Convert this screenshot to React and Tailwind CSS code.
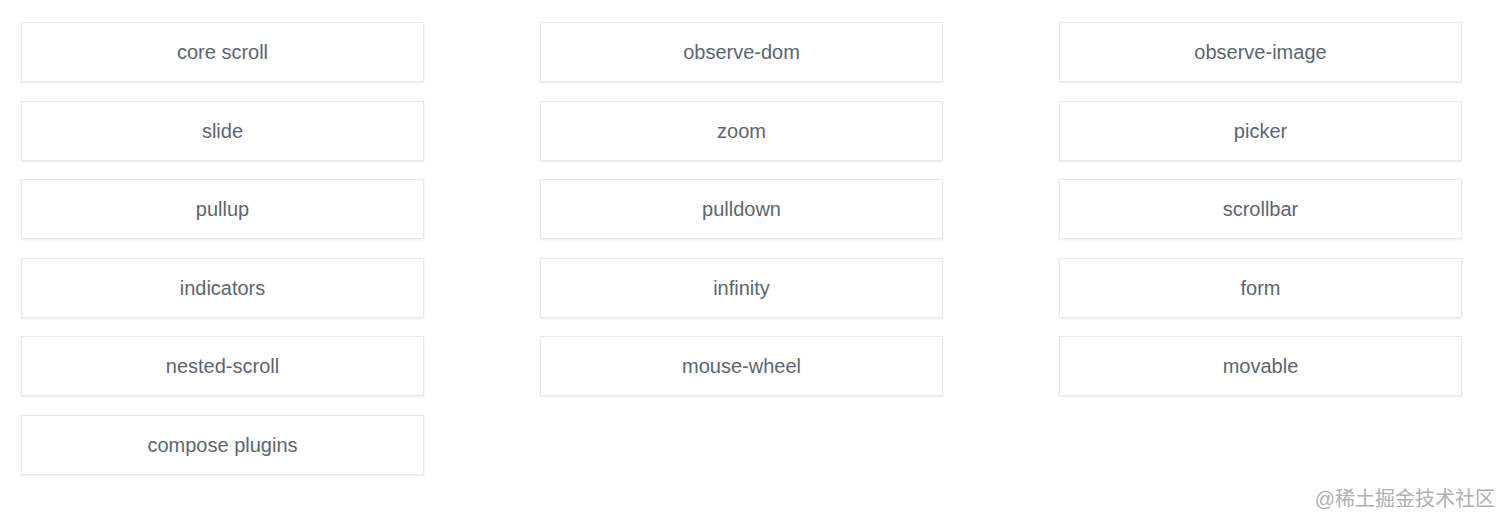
import React from 'react';

const items = [
  'core scroll', 'observe-dom', 'observe-image',
  'slide', 'zoom', 'picker',
  'pullup', 'pulldown', 'scrollbar',
  'indicators', 'infinity', 'form',
  'nested-scroll', 'mouse-wheel', 'movable',
  'compose plugins',
];

const App = () => (
  <div className="relative h-[526px] w-[1512px] bg-white font-['Liberation_Sans',Arial,sans-serif] overflow-hidden">
    <ul className="grid grid-cols-[repeat(3,403px)] gap-x-[116px] gap-y-[18.6px] pl-[21px] pt-[22px]">
      {items.map((name) => (
        <li
          key={name}
          className="h-[60px] flex items-center justify-center border border-[#e9e9e9] bg-white shadow-[0_1px_2px_rgba(0,0,0,0.08)] text-[20px] text-[#5c6670] cursor-pointer"
        >
          {name}
        </li>
      ))}
    </ul>
    <div className="absolute right-[17px] bottom-[15px] text-[20px] leading-[24px] text-[#b0b0b0] font-['Liberation_Sans','Noto_Sans_CJK_SC',sans-serif]">
      @稀土掘金技术社区
    </div>
  </div>
);

export default App;
